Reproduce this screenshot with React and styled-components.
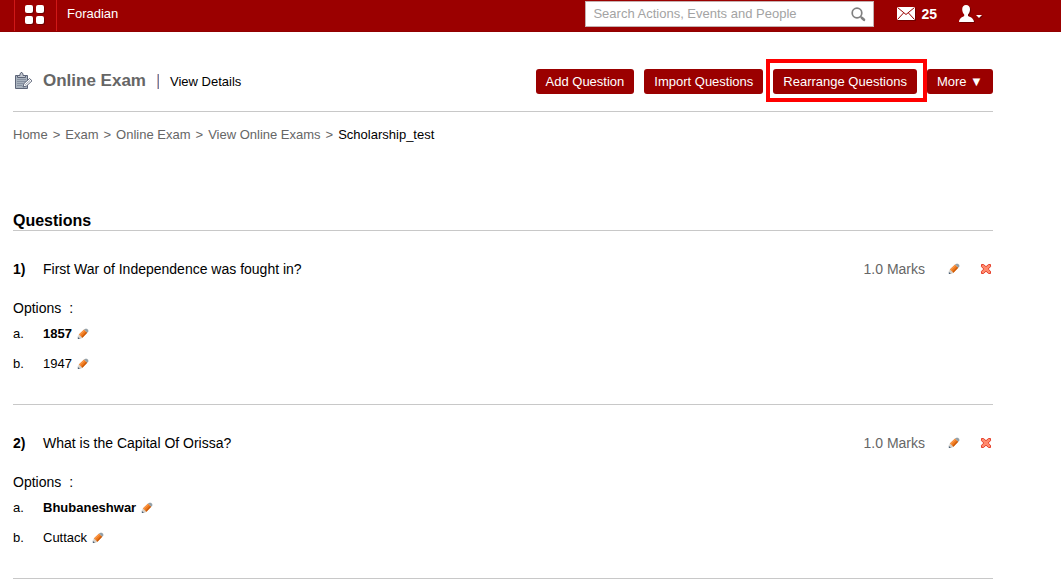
import React from 'react';
import styled, { createGlobalStyle } from 'styled-components';

const GlobalStyle = createGlobalStyle`
  * { box-sizing: border-box; }
  body {
    margin: 0;
    background: #fff;
    color: #000;
    font: 13px/20px "Liberation Sans", Arial, sans-serif;
  }
  button, input { font: inherit; }
  button { cursor: pointer; }
  a { color: inherit; text-decoration: none; }
  svg { display: block; }
`;

const TopBar = styled.header`
  display: flex;
  align-items: flex-start;
  height: 32px;
  padding: 0 77px 0 14px;
  background: #9b0000;
  border-bottom: 1px solid #910000;
  color: #fff;
`;

const AppsButton = styled.button`
  display: flex;
  width: 43px;
  height: 31px;
  padding: 4px 0 0 10px;
  border: solid #d01818;
  border-width: 0 1px;
  background: none;
`;

const School = styled.a`
  margin: 4px auto 0 10px;
`;

const SearchBox = styled.form`
  display: flex;
  align-items: center;
  width: 289px;
  height: 26px;
  margin-top: 1px;
  padding: 0 7px;
  border: 1px solid #c4b0b0;
  background: #fff;
`;

const SearchInput = styled.input`
  flex: 1;
  min-width: 0;
  padding: 0;
  border: 0;
  outline: 0;
  background: none;
  &::placeholder { color: #a3a3a3; opacity: 1; }
`;

const IconButton = styled.button`
  display: block;
  padding: 0;
  border: 0;
  background: none;
`;

const Messages = styled.a`
  display: flex;
  align-items: center;
  gap: 5px;
  height: 28px;
  margin-left: 23px;
  font-size: 14px;
  font-weight: bold;
`;

const UserButton = styled(IconButton)`
  margin: 5px 0 0 22px;
`;

const Page = styled.main`
  padding: 0 68px 0 13px;
`;

const TitleBar = styled.div`
  display: flex;
  align-items: center;
  padding: 37px 0 17px;
  border-bottom: 1px solid #c8c8c8;
`;

const Title = styled.h1`
  display: flex;
  align-items: center;
  gap: 10px;
  margin: 0;
  padding-bottom: 1px;
  color: #666;
  font-size: 17px;
  line-height: 22px;
`;

const Divider = styled.span`
  width: 2px;
  height: 15px;
  margin: 0 11px;
  border: solid #d9b3a8;
  border-width: 0 0 0 1px;
  background: #7080ad;
`;

const Actions = styled.div`
  display: flex;
  gap: 10px;
  margin-left: auto;
`;

const ActionButton = styled.button`
  height: 25px;
  padding: 0 10px;
  border: 0;
  border-radius: 3px;
  background: #9b0000;
  color: #fff;
  white-space: nowrap;
`;

const Highlight = styled.div`
  position: relative;
  &::after {
    content: "";
    position: absolute;
    inset: -10px -10px -8px -7px;
    border: 4px solid #f00;
    pointer-events: none;
  }
`;

const Breadcrumb = styled.nav`
  display: flex;
  gap: 5px;
  padding-top: 13px;
  color: #666;
`;

const Current = styled.span`
  color: #000;
`;

const SectionTitle = styled.h2`
  margin: 67px 0 0;
  border-bottom: 1px solid #c8c8c8;
  font-size: 16px;
  line-height: 18px;
`;

const Question = styled.section`
  padding: 28px 0 25px;
  border-bottom: 1px solid #c8c8c8;
`;

const QuestionRow = styled.div`
  display: flex;
  align-items: center;
  padding-right: 1px;
  font-size: 14px;
`;

const Number = styled.strong`
  width: 30px;
`;

const QuestionText = styled.h3`
  flex: 1;
  margin: 0;
  font-size: 14px;
  font-weight: normal;
`;

const Marks = styled.span`
  margin-right: 23px;
  color: #666;
`;

const DeleteButton = styled(IconButton)`
  margin-left: 20px;
`;

const OptionsLabel = styled.p`
  display: flex;
  gap: 8px;
  height: 21px;
  margin: 19px 0 0;
  font-size: 14px;
`;

const OptionRow = styled.div`
  display: flex;
  align-items: center;
  height: 30px;
`;

const Letter = styled.span`
  width: 30px;
`;

const Answer = styled.span`
  margin-right: 5px;
  font-weight: ${(p) => (p.$correct ? 'bold' : 'normal')};
`;

const AppsIcon = () => (
  <svg width="20" height="21" viewBox="0 0 20 21">
    <g fill="#500000" opacity=".6">
      <rect x="1" y="2" width="8" height="8" rx="2" />
      <rect x="12" y="2" width="8" height="8" rx="2" />
      <rect x="1" y="13" width="8" height="8" rx="2" />
      <rect x="12" y="13" width="8" height="8" rx="2" />
    </g>
    <g fill="#fff">
      <rect x="0" y="1" width="8" height="8" rx="2" />
      <rect x="11" y="1" width="8" height="8" rx="2" />
      <rect x="0" y="12" width="8" height="8" rx="2" />
      <rect x="11" y="12" width="8" height="8" rx="2" />
    </g>
  </svg>
);

const SearchIcon = () => (
  <svg width="15" height="15" viewBox="0 0 15 15" fill="none" stroke="#808080">
    <circle cx="6" cy="6" r="4.8" strokeWidth="1.7" />
    <path d="M9.5 9.5L11 11" strokeWidth="1.7" />
    <path d="M11 11l2 1.800" strokeWidth="2.600" strokeLinecap="round" />
  </svg>
);

const MailIcon = () => (
  <svg width="19" height="14" viewBox="0 0 19 14">
    <path d="M1 1h18v13H1z" fill="#500000" opacity=".6" />
    <path d="M0 0h18v13H0z" fill="#fff" />
    <path d="M.5.5L9 7.5 17.500.5M.5 12.500L6.500 6M17.500 12.500L11.500 6" fill="none" stroke="#9b0000" strokeWidth="1" />
  </svg>
);

const personPath =
  'M7 0c2.600 0 4 1.700 4 4.300 0 2.200-.8 4-2 5.200v1.600c1.200 1 5.500 1.300 6 5.900H0c.5-4.600 4.300-4.900 5.200-5.900V9.500C4 8.300 3.200 6.500 3.200 4.300 3.200 1.700 4.600 0 7 0z';

const UserIcon = () => (
  <svg width="25" height="19" viewBox="0 0 25 19">
    <g fill="#500000" opacity=".6" transform="translate(1 1)">
      <path d={personPath} />
      <path d="M17 10h6l-3 3z" />
    </g>
    <g fill="#fff">
      <path d={personPath} />
      <path d="M17 10h6l-3 3z" />
    </g>
  </svg>
);

const ExamIcon = () => (
  <svg width="20" height="18" viewBox="0 0 20 18">
    <path d="M2.500 3.500h12v13h-12z" fill="#a9b3be" stroke="#5d6578" />
    <path d="M4.500 5.500v-2h2.500v-1.500L8 .5h1L10 2v1.500h2.500v2z" fill="#c3c8d0" stroke="#5d6578" />
    <path d="M4 7.500h9M4 9.500h9M4 11.500h7M4 13.500h5" stroke="#8690a0" />
    <path d="M10 15l1-3.500L16.500 6.500l2.500 2.300-5.500 5.200z" fill="#fff" stroke="#5d6578" />
    <path d="M12.200 12.800l4.800-4.300" stroke="#9aa2ae" />
  </svg>
);

const PencilIcon = () => (
  <svg width="12" height="12" viewBox="0 0 12 12">
    <path d="M.8 8.500L3.200 11H.8z" fill="#4c6074" />
    <path d="M1 8.500l1-2.400 3.600 3.600-2.400 1.200z" fill="#d6d0c8" />
    <path d="M1.900 6.200L7 1.500l3.200 3.200-4.800 5z" fill="#f07c20" />
    <path d="M4.500 8.700L9.200 3.800l1 1-4.800 4.900z" fill="#cc5a08" />
    <path d="M2.900 6.600l4.700-4.500" stroke="#ffa661" />
    <path d="M7 1.500L8.300.7h1.700l1.300 1.400v1.600l-1.100 1z" fill="#93a0a8" />
  </svg>
);

const DeleteIcon = () => (
  <svg width="12" height="12" viewBox="0 0 12 12">
    <path
      d="M1.500 1.500h2L6 3.700l2.500-2.200h2v2.200L8.200 6l2.300 2.300v2.200h-2L6 8.200l-2.500 2.300h-2V8.300L3.800 6 1.500 3.700z"
      fill="#ff8a6c"
      stroke="#e5402c"
      strokeLinejoin="round"
    />
  </svg>
);

const questions = [
  {
    text: 'First War of Independence was fought in?',
    options: [{ text: '1857', correct: true }, { text: '1947' }],
  },
  {
    text: 'What is the Capital Of Orissa?',
    options: [{ text: 'Bhubaneshwar', correct: true }, { text: 'Cuttack' }],
  },
];

const trail = ['Home', 'Exam', 'Online Exam', 'View Online Exams'];

export default function App() {
  return (
    <>
      <GlobalStyle />
      <TopBar>
        <AppsButton type="button" aria-label="Apps"><AppsIcon /></AppsButton>
        <School href="#">Foradian</School>
        <SearchBox role="search">
          <SearchInput aria-label="Search" placeholder="Search Actions, Events and People" />
          <IconButton type="button" aria-label="Submit search"><SearchIcon /></IconButton>
        </SearchBox>
        <Messages href="#" aria-label="25 messages"><MailIcon />25</Messages>
        <UserButton type="button" aria-label="Account"><UserIcon /></UserButton>
      </TopBar>
      <Page>
        <TitleBar>
          <Title><ExamIcon />Online Exam</Title>
          <Divider />
          <a href="#">View Details</a>
          <Actions>
            <ActionButton type="button">Add Question</ActionButton>
            <ActionButton type="button">Import Questions</ActionButton>
            <Highlight>
              <ActionButton type="button">Rearrange Questions</ActionButton>
            </Highlight>
            <ActionButton type="button">More ▼</ActionButton>
          </Actions>
        </TitleBar>
        <Breadcrumb aria-label="Breadcrumb">
          {trail.map((item) => (
            <React.Fragment key={item}>
              <a href="#">{item}</a>
              <span>&gt;</span>
            </React.Fragment>
          ))}
          <Current>Scholarship_test</Current>
        </Breadcrumb>
        <SectionTitle>Questions</SectionTitle>
        {questions.map((q, i) => (
          <Question key={q.text}>
            <QuestionRow>
              <Number>{i + 1})</Number>
              <QuestionText>{q.text}</QuestionText>
              <Marks>1.0 Marks</Marks>
              <IconButton type="button" aria-label="Edit question"><PencilIcon /></IconButton>
              <DeleteButton type="button" aria-label="Delete question"><DeleteIcon /></DeleteButton>
            </QuestionRow>
            <OptionsLabel><span>Options</span><span>:</span></OptionsLabel>
            {q.options.map((o, j) => (
              <OptionRow key={o.text}>
                <Letter>{'ab'[j]}.</Letter>
                <Answer $correct={o.correct}>{o.text}</Answer>
                <IconButton type="button" aria-label={`Edit ${o.text}`}><PencilIcon /></IconButton>
              </OptionRow>
            ))}
          </Question>
        ))}
      </Page>
    </>
  );
}
